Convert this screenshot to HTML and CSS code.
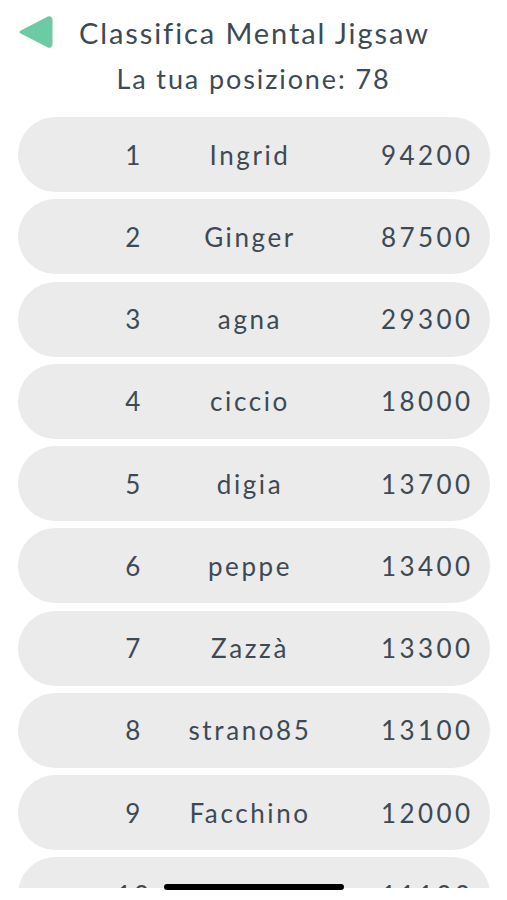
FILE: index.html
```html
<!DOCTYPE html>
<html lang="it">
<head>
<meta charset="utf-8">
<title>Classifica Mental Jigsaw</title>
<link rel="stylesheet" href="styles.css">
</head>
<body>
<div class="screen">
  <header class="topbar">
    <svg class="back" width="36" height="34" viewBox="0 0 36 34" aria-hidden="true">
      <path d="M4 17 L31 3 Q34 2 34 5 L34 29 Q34 32 31 31 Z" fill="#6ccaa4" stroke="#6ccaa4" stroke-width="3" stroke-linejoin="round"/>
    </svg>
    <h1 class="title">Classifica Mental Jigsaw</h1>
  </header>
  <p class="position">La tua posizione: 78</p>
  <div class="list">
    <div class="row"><span class="rank">1</span><span class="name">Ingrid</span><span class="score">94200</span></div>
    <div class="row"><span class="rank">2</span><span class="name">Ginger</span><span class="score">87500</span></div>
    <div class="row"><span class="rank">3</span><span class="name">agna</span><span class="score">29300</span></div>
    <div class="row"><span class="rank">4</span><span class="name">ciccio</span><span class="score">18000</span></div>
    <div class="row"><span class="rank">5</span><span class="name">digia</span><span class="score">13700</span></div>
    <div class="row"><span class="rank">6</span><span class="name">peppe</span><span class="score">13400</span></div>
    <div class="row"><span class="rank">7</span><span class="name">Zazzà</span><span class="score">13300</span></div>
    <div class="row"><span class="rank">8</span><span class="name">strano85</span><span class="score">13100</span></div>
    <div class="row"><span class="rank">9</span><span class="name">Facchino</span><span class="score">12000</span></div>
    <div class="row"><span class="rank">10</span><span class="name">lalala</span><span class="score">11100</span></div>
  </div>
  <div class="homebar"></div>
</div>
</body>
</html>
```
FILE: styles.css
```css
* { box-sizing: border-box; }
html, body { margin: 0; padding: 0; background: #ffffff; }
body {
  font-family: "Lato", "Noto Sans", sans-serif;
  color: #3d4a55;
}
.screen {
  position: relative;
  width: 507px;
  height: 900px;
  overflow: hidden;
}
.topbar {
  height: 64px;
  display: flex;
  align-items: center;
  padding-left: 17px;
}
.back { display: block; flex: none; }
.title {
  margin: 0 0 0 26px;
  font-size: 29px;
  font-weight: 400;
  letter-spacing: 1.9px;
  line-height: 1;
}
.position {
  margin: 0 0 23px 0;
  height: 30px;
  line-height: 30px;
  text-align: center;
  font-size: 27px;
  letter-spacing: 1.9px;
}
.list {
  height: 771px;
  overflow: hidden;
  display: flex;
  flex-direction: column;
  gap: 7.25px;
  padding: 0 17px 0 18px;
}
.row {
  flex: none;
  height: 75px;
  border-radius: 38px;
  background: #ebebeb;
  display: grid;
  grid-template-columns: 76px 156px 1fr;
  align-items: center;
  padding: 0 20px 0 78px;
  font-size: 26px;
  letter-spacing: 2.6px;
}
.rank { text-align: center; }
.name { text-align: center; }
.score { text-align: right; letter-spacing: 3.4px; margin-right: -3.4px; }
.homebar {
  position: absolute;
  left: 164px;
  top: 884px;
  width: 180px;
  height: 6px;
  border-radius: 3px;
  background: #000;
}
```
